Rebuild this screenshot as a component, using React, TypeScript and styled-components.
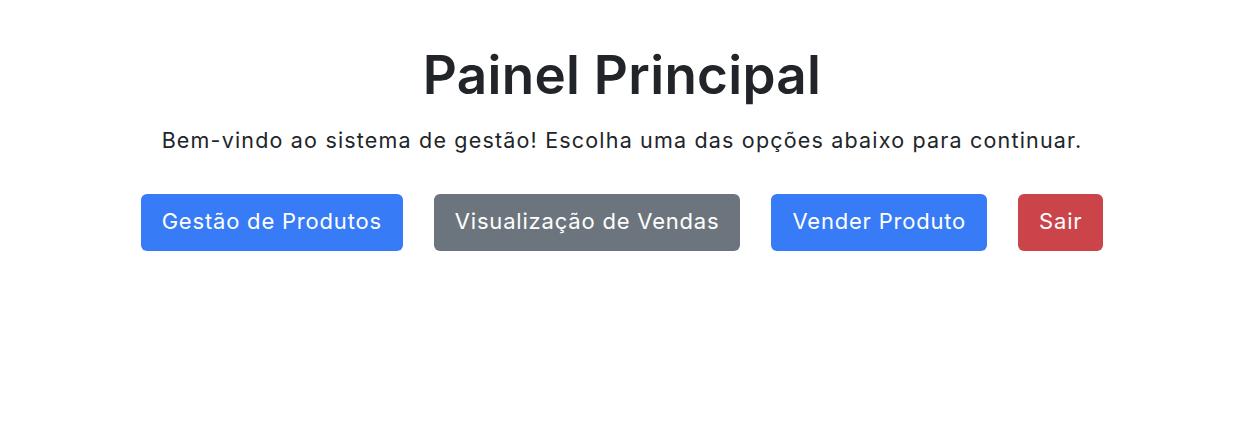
import React from "react";
import styled, { createGlobalStyle } from "styled-components";

const GlobalStyle = createGlobalStyle`
  html, body { margin: 0; padding: 0; background: #ffffff; }
  body {
    font-family: Inter, "Noto Sans", "Liberation Sans", sans-serif;
    color: #212529;
    -webkit-font-smoothing: antialiased;
  }
`;

const Page = styled.main`
  width: 1244px;
  display: flex;
  flex-direction: column;
  align-items: center;
  padding-top: 44px;
`;

const Title = styled.h1`
  margin: 0;
  font-size: 53px;
  font-weight: 600;
  line-height: 1.2;
  letter-spacing: 0.3px;
`;

const Lead = styled.p`
  margin: 17px 0 0;
  font-size: 21.5px;
  font-weight: 400;
  line-height: 31.5px;
  letter-spacing: 1.18px;
`;

const Actions = styled.nav`
  display: flex;
  gap: 31px;
  margin-top: 38px;
`;

type Variant = "primary" | "secondary" | "danger";

const colors: Record<Variant, string> = {
  primary: "#377bf6",
  secondary: "#6c757d",
  danger: "#cb444a",
};

const Button = styled.button<{ $variant: Variant }>`
  font-family: inherit;
  font-size: 22px;
  font-weight: 400;
  line-height: 33px;
  letter-spacing: 0.8px;
  padding: 11px 21px 13px;
  border: none;
  border-radius: 6px;
  color: #ffffff;
  background: ${(p) => colors[p.$variant]};
  cursor: pointer;
`;

export default function App() {
  return (
    <>
      <GlobalStyle />
      <Page>
        <Title>Painel Principal</Title>
        <Lead>Bem-vindo ao sistema de gestão! Escolha uma das opções abaixo para continuar.</Lead>
        <Actions>
          <Button $variant="primary">Gestão de Produtos</Button>
          <Button $variant="secondary">Visualização de Vendas</Button>
          <Button $variant="primary">Vender Produto</Button>
          <Button $variant="danger">Sair</Button>
        </Actions>
      </Page>
    </>
  );
}
